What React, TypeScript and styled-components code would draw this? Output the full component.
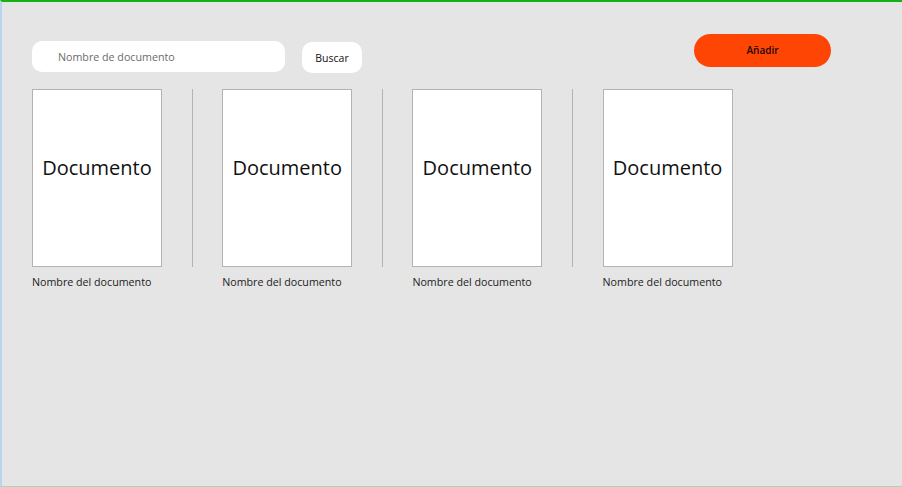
import React from 'react';
import styled, { createGlobalStyle } from 'styled-components';

const GlobalStyle = createGlobalStyle`
  html, body {
    margin: 0;
    padding: 0;
    background: #e5e5e5;
  }
  body {
    font-family: 'Open Sans', 'Noto Sans', sans-serif;
  }
`;

const Page = styled.div`
  box-sizing: border-box;
  height: 487px;
  background: #e5e5e5;
  border-top: 2px solid #14b014;
  border-left: 2px solid #b9d5f0;
  border-bottom: 1px solid #a5d9a5;
  padding: 32px 71px 0 30px;
`;

const Header = styled.div`
  display: flex;
  align-items: flex-start;
  height: 39px;
`;

const SearchInput = styled.input`
  box-sizing: border-box;
  width: 253px;
  height: 31px;
  margin-top: 7px;
  border: none;
  border-radius: 10px;
  background: #fff;
  padding: 1px 0 0 26px;
  font-family: inherit;
  font-size: 10.7px;
  color: #333;
  outline: none;

  &::placeholder {
    color: #6b6b6b;
  }
`;

const SearchButton = styled.button`
  box-sizing: border-box;
  width: 60px;
  height: 31px;
  margin: 8px 0 0 17px;
  border: none;
  border-radius: 10px;
  background: #fff;
  font-family: inherit;
  font-size: 10.5px;
  color: #111;
  padding: 1px 0 0;
`;

const AddButton = styled.button`
  box-sizing: border-box;
  width: 137px;
  height: 33px;
  margin-left: auto;
  border: none;
  border-radius: 17px;
  background: #ff4503;
  font-family: inherit;
  font-size: 10px;
  font-weight: 600;
  color: #1a0804;
  padding: 0 0 1px;
`;

const Grid = styled.div`
  display: flex;
  align-items: flex-start;
  gap: 29.6px;
  margin-top: 16px;
`;

const Item = styled.div`
  display: flex;
  flex-direction: column;
  width: 130px;
`;

const Sheet = styled.div`
  box-sizing: border-box;
  height: 178px;
  background: #fff;
  border: 1px solid #b3b3b3;
  display: flex;
  align-items: center;
  justify-content: center;
  font-size: 20px;
  color: #111;
  padding-bottom: 21px;
`;

const Caption = styled.div`
  margin-top: 8px;
  font-size: 10.7px;
  color: #222;
  white-space: nowrap;
`;

const Divider = styled.div`
  width: 1px;
  height: 178px;
  background: #b3b3b3;
`;

const docs = ['Nombre del documento', 'Nombre del documento', 'Nombre del documento', 'Nombre del documento'];

export default function App() {
  return (
    <>
      <GlobalStyle />
      <Page>
        <Header>
          <SearchInput placeholder="Nombre de documento" />
          <SearchButton>Buscar</SearchButton>
          <AddButton>Añadir</AddButton>
        </Header>
        <Grid>
          {docs.map((name, i) => (
            <React.Fragment key={i}>
              {i > 0 && <Divider />}
              <Item>
                <Sheet>Documento</Sheet>
                <Caption>{name}</Caption>
              </Item>
            </React.Fragment>
          ))}
        </Grid>
      </Page>
    </>
  );
}
